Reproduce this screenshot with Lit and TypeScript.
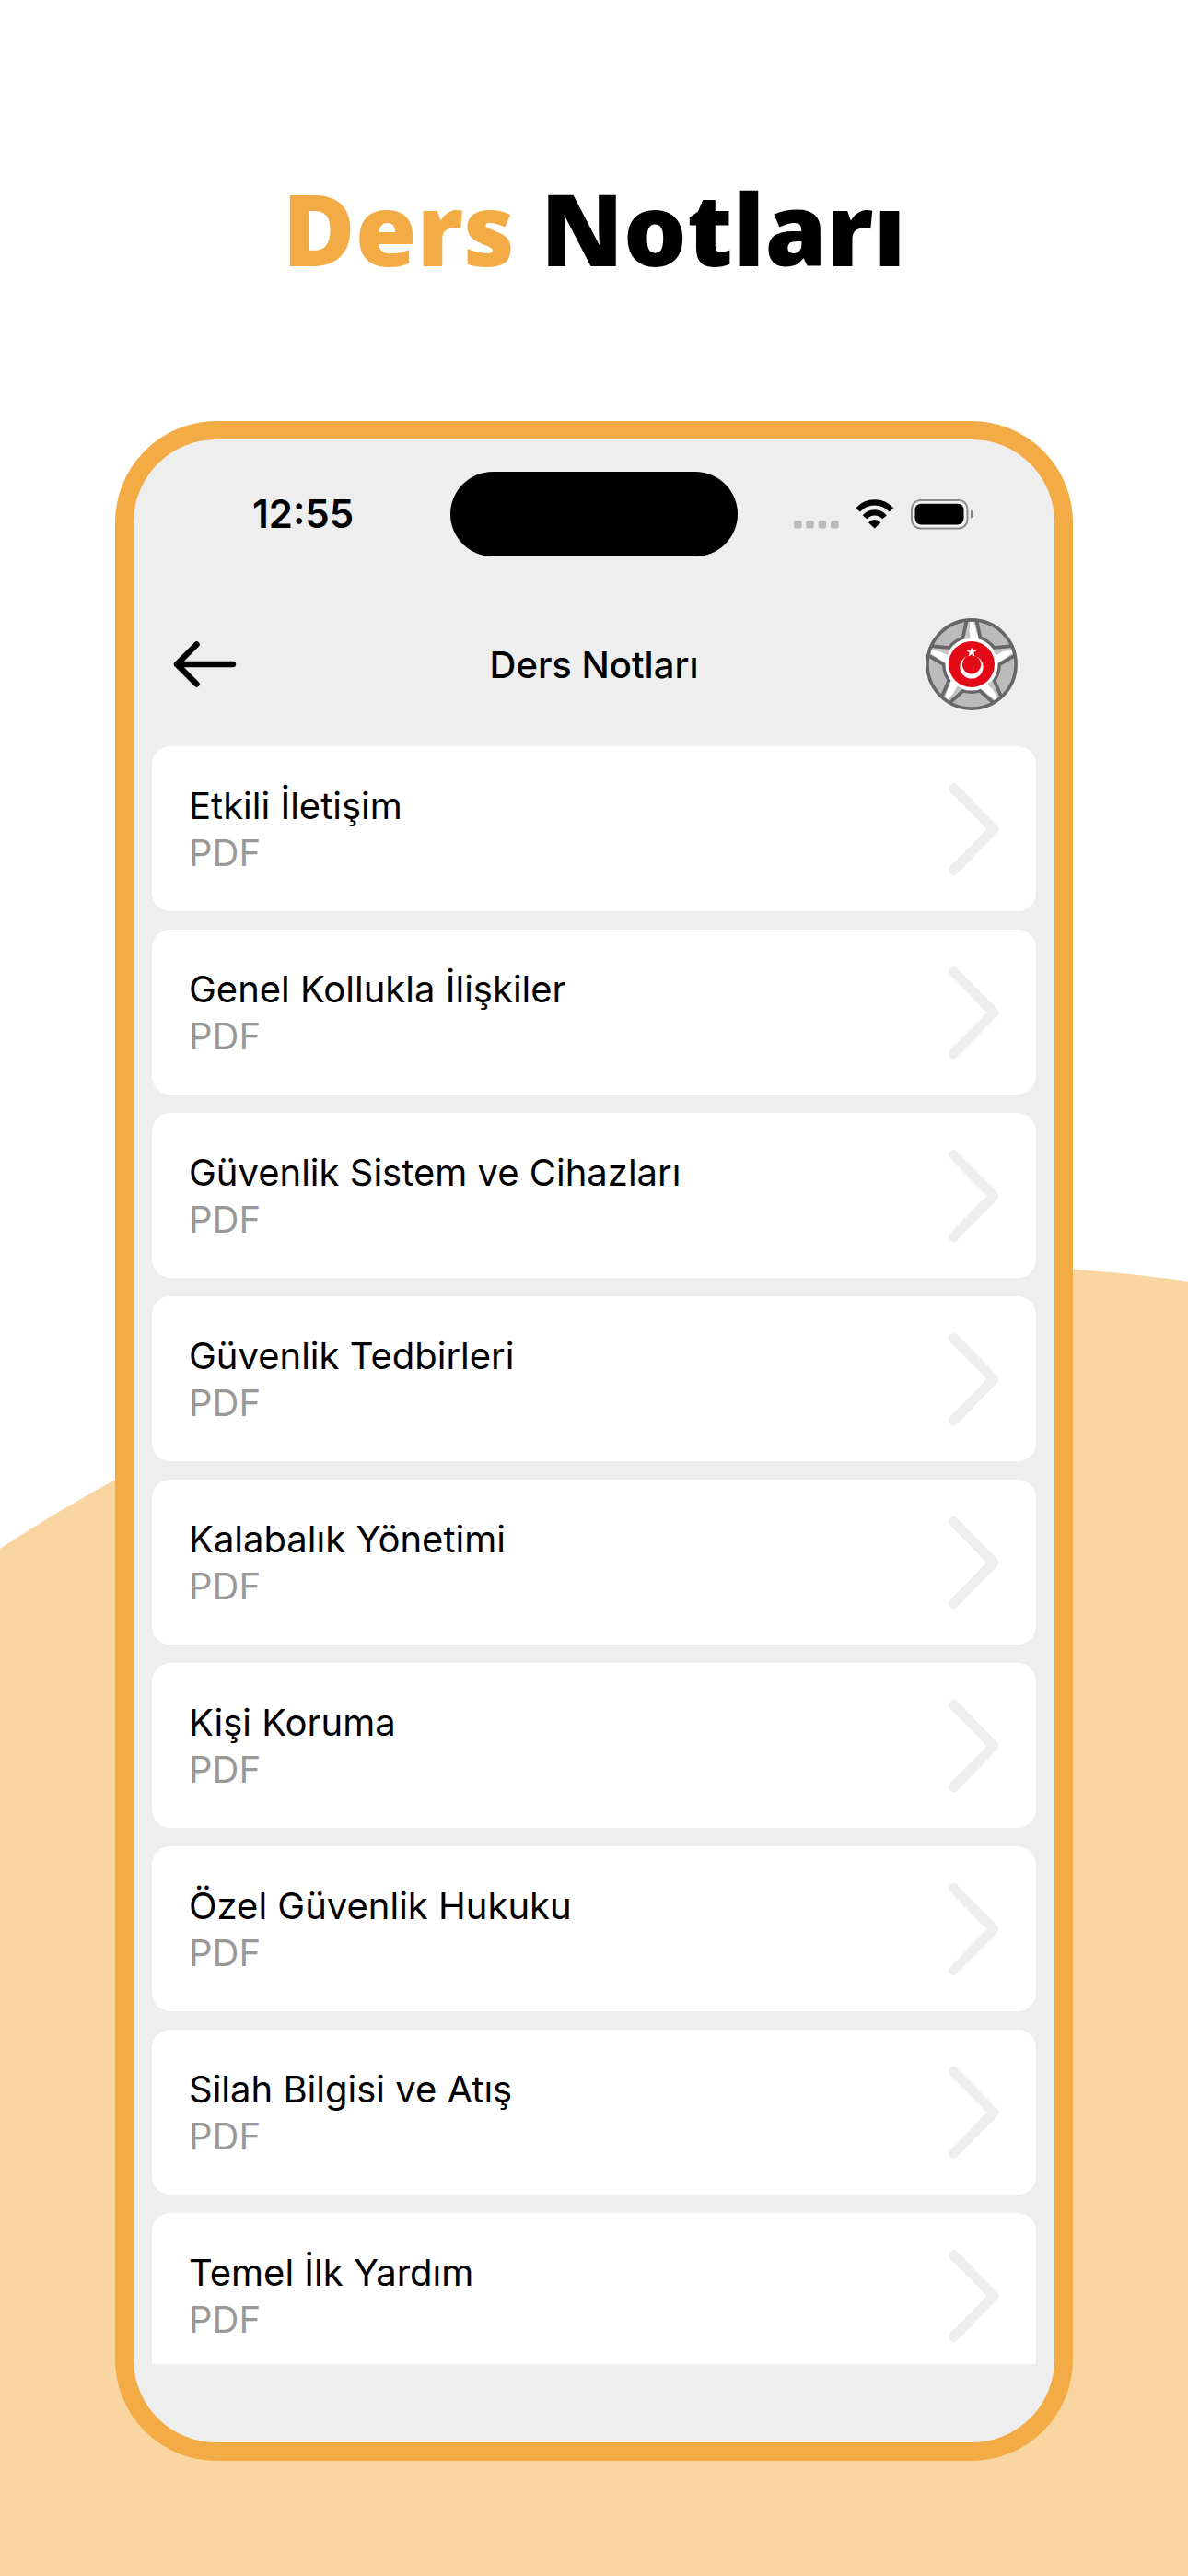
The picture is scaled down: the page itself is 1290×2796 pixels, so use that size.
import { LitElement, html, css, svg } from "lit";
import { customElement, property } from "lit/decorators.js";

interface Note {
  title: string;
  kind: string;
}

const NOTES: Note[] = [
  "Etkili İletişim",
  "Genel Kollukla İlişkiler",
  "Güvenlik Sistem ve Cihazları",
  "Güvenlik Tedbirleri",
  "Kalabalık Yönetimi",
  "Kişi Koruma",
  "Özel Güvenlik Hukuku",
  "Silah Bilgisi ve Atış",
  "Temel İlk Yardım",
].map((title) => ({ title, kind: "PDF" }));

@customElement("status-bar")
export class StatusBar extends LitElement {
  static styles = css`
    :host {
      display: grid;
      grid-template-columns: 1fr auto 1fr;
      align-items: center;
      padding: 35px 87px 27px;
    }
    .time {
      padding-left: 42px;
      font-size: 42px;
      line-height: 50px;
      font-weight: 600;
    }
    .island {
      width: 312px;
      height: 92px;
      border-radius: 46px;
      background: #000;
    }
    .icons {
      display: block;
      justify-self: end;
      width: 196px;
      height: 34px;
    }
  `;

  render() {
    return html`
      <time class="time">12:55</time>
      <div class="island"></div>
      <svg class="icons" viewBox="0 0 196 34" aria-hidden="true">
        <g fill="#bbb">
          <rect x="0" y="24" width="8.5" height="8.5" rx="2.6" />
          <rect x="13.3" y="24" width="8.5" height="8.5" rx="2.6" />
          <rect x="26.7" y="24" width="8.5" height="8.5" rx="2.6" />
          <rect x="40" y="24" width="8.5" height="8.5" rx="2.6" />
        </g>
        <g fill="none" stroke="#000" stroke-width="6.2">
          <path d="M69.5 12.5A24.6 24.6 0 0 1 106 12.5" />
          <path d="M77 20.4A13.9 13.9 0 0 1 98.5 20.4" />
        </g>
        <path d="M81 26.2Q87.7 19.6 94.4 26.2L87.7 32.5Z" />
        <rect x="128" y="2" width="60.5" height="30.5" rx="9.5" fill="#f3f3f3" stroke="#8b8b8b" stroke-width="2" />
        <rect x="131.5" y="5.7" width="53" height="22.8" rx="6.5" />
        <path d="M192 12.5Q195.2 14 195.2 17.2T192 21.8Z" fill="#808080" />
      </svg>
    `;
  }
}

@customElement("star-badge")
export class StarBadge extends LitElement {
  static styles = css`
    :host {
      display: block;
      width: 100px;
      height: 100px;
    }
    .badge {
      display: block;
      width: 100%;
      height: 100%;
    }
  `;

  render() {
    const arms = [
      { turn: 0, side: 1 },
      { turn: 72, side: 1 },
      { turn: 144, side: 1 },
      { turn: 216, side: 1 },
      { turn: 288, side: -1 },
    ];
    return html`
      <svg class="badge" viewBox="-50 -50 100 100" role="img" aria-label="Özel güvenlik">
        <circle r="48" fill="#bbb" />
        <circle r="32" fill="#666" />
        ${arms.map(
          (arm) => svg`<path transform="rotate(${arm.turn})" fill="#666" d="M-7.2 -48L-11.8 -27H11.8L7.2 -48Z"/>`
        )}
        <circle r="28.6" fill="#fff" />
        ${arms.map(
          (arm) => svg`<g transform="rotate(${arm.turn}) scale(${arm.side} 1)">
            <path fill="#c4c4c4" d="M-3.6 -47L-8 -27H8L3.6 -47Z"/>
            <path fill="#fff" d="M-1.6 -46L-2.4 -36L-1 -26H8L2.2 -46Z"/>
          </g>`
        )}
        <circle r="28" fill="#fff" />
        <circle r="48.1" fill="none" stroke="#666" stroke-width="3.6" />
        <circle r="25" fill="#e30a17" />
        <circle cy="3" r="12.6" fill="#fff" />
        <circle cy="0.2" r="10.2" fill="#e30a17" />
        <path
          fill="#fff"
          d="M0 -18.5L1.4 -14.8L5.4 -14.9L2.3 -12.4L3.5 -8.4L0 -10.7L-3.5 -8.4L-2.3 -12.4L-5.4 -14.9L-1.4 -14.8Z"
        />
      </svg>
    `;
  }
}

@customElement("note-row")
export class NoteRow extends LitElement {
  @property({ attribute: false }) note!: Note;

  static styles = css`
    :host {
      display: block;
    }
    .row {
      display: flex;
      align-items: center;
      justify-content: space-between;
      padding: 39px 40px 38px;
      border-radius: 20px;
      background: #fff;
      color: #000;
      text-decoration: none;
    }
    .text {
      display: flex;
      flex-direction: column;
      font-size: 40px;
      line-height: 51px;
    }
    .kind {
      color: #999;
    }
    .chevron {
      display: block;
      width: 56px;
      height: 100px;
    }
  `;

  render() {
    return html`
      <a class="row" href="#">
        <span class="text">
          <span class="title">${this.note.title}</span>
          <span class="kind">${this.note.kind}</span>
        </span>
        <svg class="chevron" viewBox="0 0 56 100" aria-hidden="true">
          <path
            d="M6.5 5.5L50 50L6.5 94.5"
            fill="none"
            stroke="#eee"
            stroke-width="11"
            stroke-linecap="round"
            stroke-linejoin="round"
          />
        </svg>
      </a>
    `;
  }
}

@customElement("app-root")
export class AppRoot extends LitElement {
  static styles = css`
    :host {
      display: block;
      font-family: Inter, "Liberation Sans", sans-serif;
      color: #000;
    }
    .page {
      position: relative;
      display: flex;
      flex-direction: column;
      box-sizing: border-box;
      height: 100vh;
      padding: 0 125px 125px;
      overflow: hidden;
      background: #fff;
    }
    .backdrop {
      position: absolute;
      top: 1373px;
      left: 80%;
      width: 292%;
      aspect-ratio: 1;
      border-radius: 50%;
      background: #f9d5a2;
      transform: translateX(-50%);
    }
    .headline {
      position: relative;
      margin: 0;
      padding: 168px 0 129px;
      font-family: "Open Sans", "Noto Sans", sans-serif;
      font-size: 108px;
      line-height: 160px;
      font-weight: 800;
      text-align: center;
      white-space: nowrap;
    }
    .accent {
      color: #f3ab45;
    }
    .phone {
      position: relative;
      display: flex;
      flex-direction: column;
      flex: 1;
      min-height: 0;
      padding-bottom: 85px;
      border: 20px solid #f3ab45;
      border-radius: 110px;
      background: #eee;
    }
    .header {
      display: grid;
      grid-template-columns: 100px 1fr 100px;
      align-items: center;
      height: 179px;
      padding: 0 40px;
    }
    .back {
      padding: 0;
      border: 0;
      background: none;
      width: 76px;
      height: 76px;
      cursor: pointer;
    }
    .arrow {
      display: block;
      width: 76px;
      height: 76px;
    }
    .heading {
      margin: 0;
      padding-top: 2px;
      font-size: 40px;
      line-height: 51px;
      font-weight: 500;
      text-align: center;
    }
    .list {
      display: flex;
      flex-direction: column;
      gap: 20px;
      flex: 1;
      min-height: 0;
      margin: 0;
      padding: 0 20px;
      list-style: none;
      overflow-y: auto;
      scrollbar-width: none;
    }
    .item {
      flex: none;
    }
  `;

  render() {
    return html`
      <div class="page">
        <div class="backdrop"></div>
        <h1 class="headline"><span class="accent">Ders</span> Notları</h1>
        <main class="phone">
          <status-bar></status-bar>
          <header class="header">
            <button class="back" type="button" aria-label="Geri">
              <svg class="arrow" viewBox="0 0 76 76" aria-hidden="true">
                <path
                  d="M68 38H7M28.5 16.5L7 38L28.5 59.5"
                  fill="none"
                  stroke="#000"
                  stroke-width="6.5"
                  stroke-linecap="round"
                  stroke-linejoin="round"
                />
              </svg>
            </button>
            <h2 class="heading">Ders Notları</h2>
            <star-badge></star-badge>
          </header>
          <ul class="list">
            ${NOTES.map((note) => html`<li class="item"><note-row .note=${note}></note-row></li>`)}
          </ul>
        </main>
      </div>
    `;
  }
}
